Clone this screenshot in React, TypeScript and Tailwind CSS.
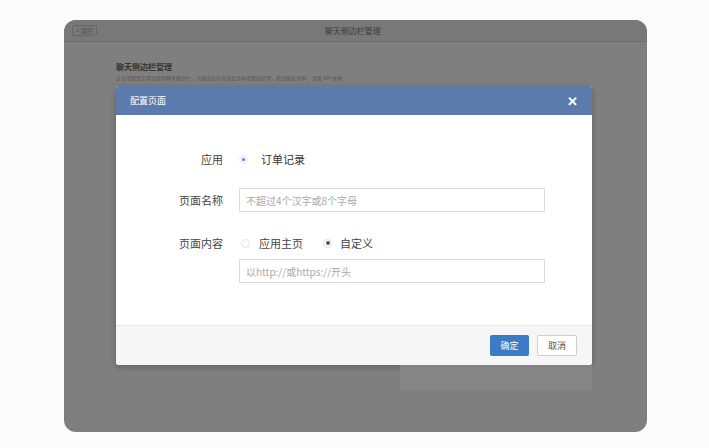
export default function App() {
  const font = { fontFamily: '"Noto Sans CJK SC", "Liberation Sans", sans-serif' };
  return (
    <div className="w-[709px] h-[448px] bg-[#fbfbfc] pt-[20px] pl-[64px]" style={font}>
      <div className="w-[583px] h-[412px] rounded-[12px] bg-[#7f7f7f] overflow-hidden flex flex-col">
        <div className="h-[22px] bg-[#787878] border-b border-[#6f6f6f] flex items-center px-[8px] relative">
          <span className="text-[6px] text-[#555] border border-[#666] rounded-[2px] px-[3px] leading-[9px]">&lt; 返回</span>
          <span className="flex-1 text-center text-[8px] text-[#3a3a3a] pr-[30px]">聊天侧边栏管理</span>
        </div>
        <div className="pl-[52px] pt-[20px]">
          <div className="text-[8px] font-bold text-[#333] leading-[10px]">聊天侧边栏管理</div>
          <div className="text-[5px] text-[#555] leading-[8px] mt-[2px]">企业可配置应用页面到聊天侧边栏，方便成员在外部会话中查看和使用，提高服务效率。 查看 API 文档</div>
          <div className="w-[476px] mt-[4px] rounded-[3px] overflow-hidden bg-white shadow-[0_2px_6px_rgba(0,0,0,.25)]">
            <div className="h-[29px] bg-[#5a7bab] flex items-center justify-between px-[14px]">
              <span className="text-[9px] text-white">配置页面</span>
              <span className="text-white text-[13px] font-bold leading-none">✕</span>
            </div>
            <div className="h-[210px] pt-[35px] text-[11px] text-[#444]">
              <div className="flex items-center h-[18px]">
                <span className="w-[107px] text-right">应用</span>
                <span className="ml-[16px] w-[9px] h-[9px] rounded-full bg-[#eef3fb] flex items-center justify-center"><span className="w-[3px] h-[3px] rounded-full bg-[#5a86d6]" /></span>
                <span className="ml-[13px] text-[#333]">订单记录</span>
              </div>
              <div className="flex items-center mt-[20px]">
                <span className="w-[107px] text-right">页面名称</span>
                <div className="ml-[16px] w-[306px] h-[24px] border border-[#dcdcdc] flex items-center px-[6px] text-[10px] text-[#aaa]">不超过4个汉字或8个字母</div>
              </div>
              <div className="flex items-center mt-[22px] h-[18px]">
                <span className="w-[107px] text-right">页面内容</span>
                <span className="ml-[18px] w-[9px] h-[9px] rounded-full border border-[#e3e3e3]" />
                <span className="ml-[9px]">应用主页</span>
                <span className="ml-[20px] w-[9px] h-[9px] rounded-full border border-[#ddd] flex items-center justify-center"><span className="w-[4px] h-[4px] rounded-full bg-[#555]" /></span>
                <span className="ml-[8px]">自定义</span>
              </div>
              <div className="ml-[123px] mt-[7px] w-[306px] h-[24px] border border-[#dcdcdc] flex items-center px-[6px] text-[10px] text-[#aaa]">以http://或https://开头</div>
            </div>
            <div className="h-[40px] bg-[#f6f6f6] border-t border-[#e8e8e8] flex items-center justify-end gap-[8px] pr-[15px]">
              <span className="w-[39px] h-[21px] bg-[#3c7bc6] text-white text-[9px] flex items-center justify-center rounded-[2px]">确定</span>
              <span className="w-[40px] h-[21px] bg-white border border-[#cfcfcf] text-[#555] text-[9px] flex items-center justify-center rounded-[2px]">取消</span>
            </div>
          </div>
          <div className="ml-[284px] w-[192px] h-[25px] bg-[#858585]" />
        </div>
      </div>
    </div>
  );
}
